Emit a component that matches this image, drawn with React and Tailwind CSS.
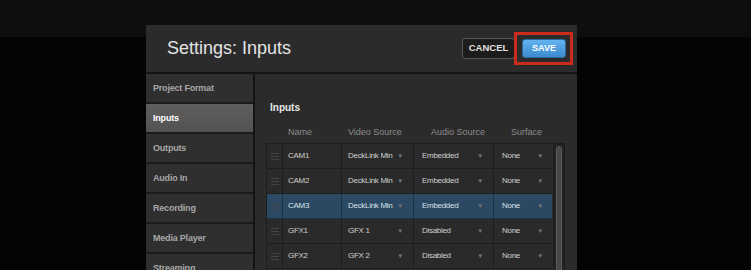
import React from 'react';

const navItems = ['Project Format', 'Inputs', 'Outputs', 'Audio In', 'Recording', 'Media Player', 'Streaming'];

const rows = [
  { name: 'CAM1', video: 'DeckLink Min', audio: 'Embedded', surface: 'None' },
  { name: 'CAM2', video: 'DeckLink Min', audio: 'Embedded', surface: 'None' },
  { name: 'CAM3', video: 'DeckLink Min', audio: 'Embedded', surface: 'None', active: true },
  { name: 'GFX1', video: 'GFX 1', audio: 'Disabled', surface: 'None' },
  { name: 'GFX2', video: 'GFX 2', audio: 'Disabled', surface: 'None' },
];

const font = { fontFamily: '"Liberation Sans", Arial, sans-serif' };

function Caret() {
  return <span className="text-[6px] text-[#777777] leading-none">▼</span>;
}

function Handle() {
  return (
    <div className="flex flex-col gap-[2px] w-[8px]">
      <span className="h-px bg-[#454545]"></span>
      <span className="h-px bg-[#454545]"></span>
      <span className="h-px bg-[#454545]"></span>
    </div>
  );
}

export default function App() {
  return (
    <div className="w-[751px] h-[270px] overflow-hidden bg-[#040404]" style={font}>
      <div className="h-[37px] bg-[#0e0e0e]"></div>

      {/* Dialog */}
      <div className="-mt-[12px] ml-[146px] w-[431px] bg-[#2b2b2b]">
        {/* Header */}
        <div className="h-[47px] flex items-center justify-between pl-[21px] pr-[11px]">
          <h1 className="text-[18px] text-[#e4e4e4] leading-none -mt-[2px]">Settings: Inputs</h1>
          <div className="flex items-center gap-[7px]">
            <button className="w-[53px] h-[21px] rounded-[3px] bg-[#1c1c1c] border border-[#575757] text-[9.5px] font-bold text-[#e0e0e0]">CANCEL</button>
            <button className="relative w-[44px] h-[19px] rounded-[3px] border border-[#2d6a9c] bg-gradient-to-b from-[#62b3f0] to-[#3c8bd0] text-[9px] font-bold text-white">
              SAVE
              <span className="absolute -left-[9px] -top-[8px] w-[59px] h-[33px] border-[3px] border-[#cc2a1c]"></span>
            </button>
          </div>
        </div>
        <div className="h-[2px] bg-[#141414]"></div>

        {/* Body */}
        <div className="flex">
          <div className="w-[107px] flex flex-col gap-[2px] bg-[#1c1c1c]">
            {navItems.map(item => (
              <div
                key={item}
                className={`h-[28px] flex items-center pl-[7px] pt-[1px] text-[9px] font-bold tracking-[-0.2px] ${
                  item === 'Inputs' ? 'bg-gradient-to-b from-[#5f5f5f] to-[#525252] text-white' : 'bg-[#2f2f2f] text-[#a8a8a8]'
                }`}
              >
                {item}
              </div>
            ))}
          </div>
          <div className="w-[2px] bg-[#141414]"></div>

          <div className="flex-1 pl-[11px] pt-[28px]">
            <p className="text-[10px] font-bold text-[#e8e8e8] leading-[12px] pl-[4px]">Inputs</p>
            <div className="flex mt-[12px] h-[17px] text-[9px] text-[#8c8c8c] leading-[12px]">
              <div className="w-[17px]"></div>
              <div className="w-[59px] pl-[5px]">Name</div>
              <div className="w-[72px] pl-[6px]">Video Source</div>
              <div className="w-[80px] pl-[17px]">Audio Source</div>
              <div className="w-[58px] pl-[17px]">Surface</div>
            </div>

            <div className="flex">
              <div className="w-[286px] border-l border-t border-[#1e1e1e]">
                {rows.map(r => (
                  <div
                    key={r.name}
                    className={`flex h-[25px] border-b text-[8px] tracking-[-0.3px] ${
                      r.active ? 'bg-[#2b4962] border-[#1c3345] text-[#d8e2ea]' : 'bg-[#2a2a2a] border-[#1e1e1e] text-[#cfcfcf]'
                    }`}
                  >
                    <div className={`w-[16px] flex items-center justify-center border-r ${r.active ? 'border-[#1c3345]' : 'border-[#1e1e1e]'}`}>
                      <Handle />
                    </div>
                    <div className={`w-[59px] flex items-center pl-[5px] border-r ${r.active ? 'border-[#1c3345]' : 'border-[#1e1e1e]'}`}>{r.name}</div>
                    <div className={`w-[72px] flex items-center justify-between pl-[6px] pr-[10px] border-r ${r.active ? 'border-[#1c3345]' : 'border-[#1e1e1e]'}`}>
                      <span>{r.video}</span>
                      <Caret />
                    </div>
                    <div className={`w-[80px] flex items-center justify-between pl-[8px] pr-[10px] border-r ${r.active ? 'border-[#1c3345]' : 'border-[#1e1e1e]'}`}>
                      <span>{r.audio}</span>
                      <Caret />
                    </div>
                    <div className="w-[58px] flex items-center justify-between pl-[8px] pr-[9px]">
                      <span>{r.surface}</span>
                      <Caret />
                    </div>
                  </div>
                ))}
              </div>
              <div className="ml-[1px] w-[12px] h-[140px] bg-[#232323] border border-[#1a1a1a] flex justify-center pt-[2px]">
                <div className="w-[6px] h-[134px] rounded-[3px] bg-[#474747] border border-[#5a5a5a]"></div>
              </div>
            </div>
          </div>
        </div>
      </div>
    </div>
  );
}
